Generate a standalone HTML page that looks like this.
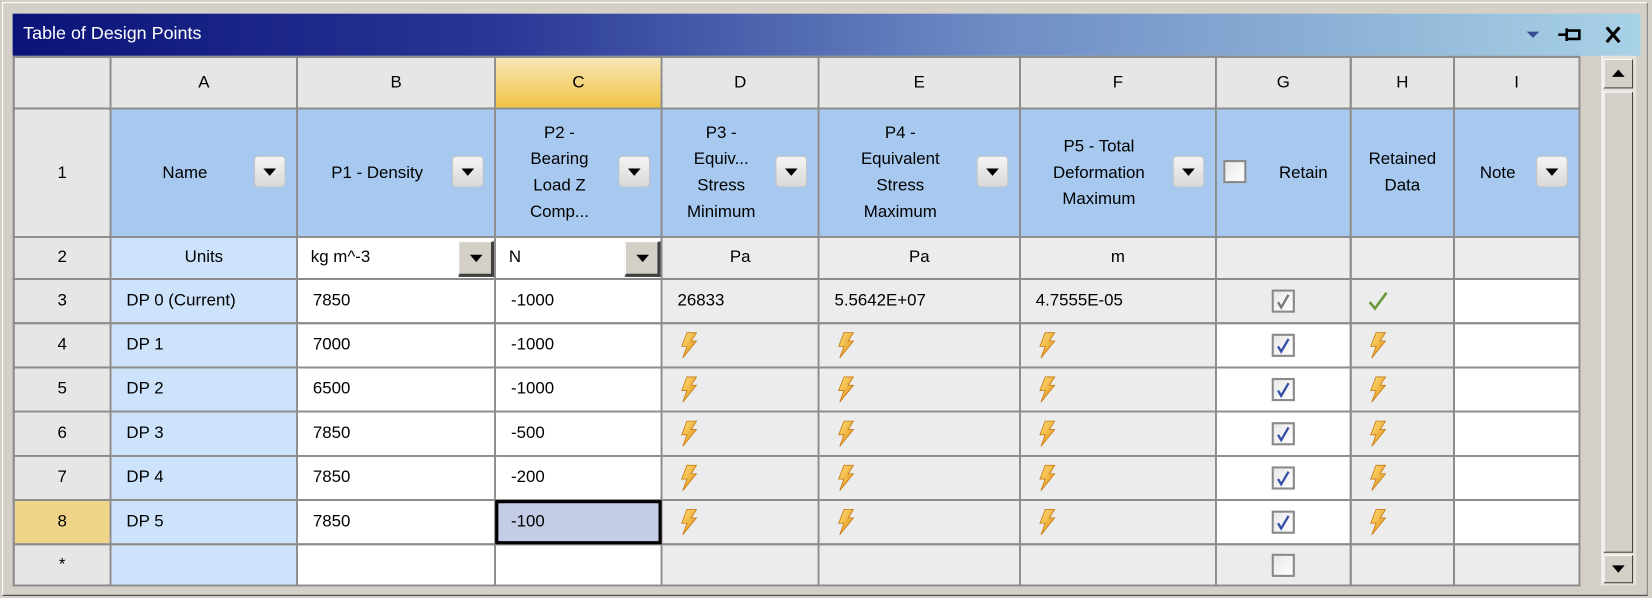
<!DOCTYPE html>
<html><head><meta charset="utf-8"><style>
html,body{margin:0;padding:0;background:#d4d0c8;width:1652px;height:598px;overflow:hidden}
#w{position:absolute;left:0;top:0;width:1568px;height:568px;transform:scale(1.0536,1.0528);transform-origin:0 0;font-family:Tahoma,"Liberation Sans","DejaVu Sans",sans-serif}
#outer{position:absolute;left:2px;top:2px;width:1560px;height:562px;border:1px solid #fff;border-right-color:#808080;border-bottom-color:#404040;background:#d4d0c8}
#title{position:absolute;left:12px;top:13px;width:1545px;height:40px;background:linear-gradient(90deg,#0a1378 0%,#2a3796 30%,#6d8cc4 60%,#a8d2e6 100%);color:#fff;font-size:17px;line-height:38px;padding-left:10px;box-sizing:border-box}
#ctl{position:absolute;right:-4px;top:0;width:120px;height:40px;color:#000;font-weight:bold;font-size:18px}
table{position:absolute;left:12px;top:53px;border-collapse:collapse;table-layout:fixed;font-size:16px;color:#000}
td{border:2px solid #8c8c8c;padding:0 0 0 14px;box-sizing:border-box;white-space:nowrap;overflow:hidden;position:relative}
.h td{background:#e6e6e6;text-align:center;padding:0}
td.rn{background:#e6e6e6;text-align:center;padding:0}
.r1 td{background:#a7c9ef;text-align:center;padding:0 40px 0 4px;line-height:25px;white-space:normal}
.r1 td.rn{background:#e6e6e6;padding:0}
.nm{background:#cde3fb}
.wh{background:#fff}
.gr{background:#ececec}
.ctr{text-align:center;padding:0}
.dd{position:absolute;right:10px;top:50%;margin-top:-16px;width:30px;height:30px;border:1px solid #c4c4c4;border-radius:4px;background:linear-gradient(#f4f4f4,#d8d8d8);box-sizing:border-box}
.dd:after{content:"";position:absolute;left:8px;top:11px;border-left:6px solid transparent;border-right:6px solid transparent;border-top:7px solid #000}
.dd2{position:absolute;right:0;top:3px;width:34px;height:34px;background:#d4d0c8;border:1px solid #fff;border-right:3px solid #404040;border-bottom:3px solid #404040;box-sizing:border-box}
.dd2:after{content:"";position:absolute;left:10px;top:12px;border-left:6px solid transparent;border-right:6px solid transparent;border-top:7px solid #000}
.cb{display:inline-block;width:22px;height:22px;border:2px solid #8a8a8a;background:linear-gradient(135deg,#e8e8e8,#fff);box-sizing:border-box;vertical-align:middle;position:relative}
.bolt{display:inline-block;vertical-align:middle}
</style></head><body><div id="w">
<div id="outer"></div>
<div id="title">Table of Design Points
<div id="ctl"><svg width="120" height="40" style="position:absolute;right:0;top:0"><path d="M8 17h12l-6 6z" fill="#3a4a8c"/><path d="M38 20h8M46 14v12M46 16h12v8H46M58 16v8" stroke="#000" stroke-width="2.5" fill="none"/><path d="M84 13l12 14M96 13L84 27" stroke="#000" stroke-width="3"/></svg></div></div>
<table>
<colgroup><col style="width:92px"><col style="width:177px"><col style="width:188px"><col style="width:158px"><col style="width:149px"><col style="width:191px"><col style="width:186px"><col style="width:128px"><col style="width:98px"><col style="width:119px"></colgroup>
<tr class="h" style="height:49px"><td></td><td>A</td><td>B</td><td style="background:linear-gradient(#f7e7b6,#f2c444)">C</td><td>D</td><td>E</td><td>F</td><td>G</td><td>H</td><td>I</td></tr>
<tr class="r1" style="height:122px"><td class="rn">1</td><td>Name<span class="dd"></span></td><td style="padding-left:4px">P1 - Density<span class="dd"></span></td><td>P2 -<br>Bearing<br>Load Z<br>Comp...<span class="dd"></span></td><td>P3 -<br>Equiv...<br>Stress<br>Minimum<span class="dd"></span></td><td>P4 -<br>Equivalent<br>Stress<br>Maximum<span class="dd"></span></td><td>P5 - Total<br>Deformation<br>Maximum<span class="dd"></span></td><td style="padding:0 0 0 38px">Retain<span class="cb" style="position:absolute;left:6px;top:48px"></span></td><td style="padding:0">Retained<br>Data</td><td>Note<span class="dd"></span></td></tr>
<tr style="height:40px"><td class="rn">2</td><td class="nm ctr">Units</td><td class="wh" style="padding-left:12px">kg m^-3<span class="dd2"></span></td><td class="wh" style="padding-left:12px">N<span class="dd2"></span></td><td class="gr ctr">Pa</td><td class="gr ctr">Pa</td><td class="gr ctr">m</td><td class="gr"></td><td class="gr"></td><td class="gr"></td></tr>
<tr style="height:42px"><td class="rn">3</td><td class="nm">DP 0 (Current)</td><td class="wh">7850</td><td class="wh">-1000</td><td class="gr">26833</td><td class="gr">5.5642E+07</td><td class="gr">4.7555E-05</td><td class="gr ctr"><span class="cb"><svg width="18" height="18" style="position:absolute;left:0;top:0"><path d="M4 10l3 5 7-12" stroke="#777" stroke-width="2.2" fill="none"/></svg></span></td><td class="gr"><svg width="22" height="22" class="bolt"><path d="M3 12l5 6 11-15" stroke="#6a9a3a" stroke-width="2.5" fill="none"/></svg></td><td class="wh"></td></tr>
<tr style="height:42px"><td class="rn">4</td><td class="nm">DP 1</td><td class="wh">7000</td><td class="wh">-1000</td><td class="gr">B</td><td class="gr">B</td><td class="gr">B</td><td class="wh ctr">C</td><td class="gr">B</td><td class="wh"></td></tr>
<tr style="height:42px"><td class="rn">5</td><td class="nm">DP 2</td><td class="wh">6500</td><td class="wh">-1000</td><td class="gr">B</td><td class="gr">B</td><td class="gr">B</td><td class="wh ctr">C</td><td class="gr">B</td><td class="wh"></td></tr>
<tr style="height:42px"><td class="rn">6</td><td class="nm">DP 3</td><td class="wh">7850</td><td class="wh">-500</td><td class="gr">B</td><td class="gr">B</td><td class="gr">B</td><td class="wh ctr">C</td><td class="gr">B</td><td class="wh"></td></tr>
<tr style="height:42px"><td class="rn">7</td><td class="nm">DP 4</td><td class="wh">7850</td><td class="wh">-200</td><td class="gr">B</td><td class="gr">B</td><td class="gr">B</td><td class="wh ctr">C</td><td class="gr">B</td><td class="wh"></td></tr>
<tr style="height:42px"><td class="rn" style="background:#f0d48a">8</td><td class="nm">DP 5</td><td class="wh">7850</td><td style="background:#c4cce6;outline:3px solid #000;outline-offset:-3px">-100</td><td class="gr">B</td><td class="gr">B</td><td class="gr">B</td><td class="wh ctr">C</td><td class="gr">B</td><td class="wh"></td></tr>
<tr style="height:39px"><td class="rn">*</td><td class="nm"></td><td class="wh"></td><td class="wh"></td><td class="gr"></td><td class="gr"></td><td class="gr"></td><td class="gr ctr"><span class="cb"></span></td><td class="gr"></td><td class="gr"></td></tr>
</table>
<div style="position:absolute;left:1520px;top:53px;width:32px;height:503px;background:#e6e3dc;border-left:1px solid #fff"></div>
<div style="position:absolute;left:1522px;top:56px;width:28px;height:28px;background:#d4d0c8;border:1px solid #fff;border-right-color:#404040;border-bottom-color:#404040;box-sizing:border-box"><div style="position:absolute;left:7px;top:9px;border-left:6px solid transparent;border-right:6px solid transparent;border-bottom:7px solid #000"></div></div>
<div style="position:absolute;left:1522px;top:87px;width:28px;height:438px;background:#d4d0c8;border:1px solid #fff;border-right-color:#404040;border-bottom-color:#404040;box-sizing:border-box"></div>
<div style="position:absolute;left:1522px;top:527px;width:28px;height:27px;background:#d4d0c8;border:1px solid #fff;border-right-color:#404040;border-bottom-color:#404040;box-sizing:border-box"><div style="position:absolute;left:7px;top:9px;border-left:6px solid transparent;border-right:6px solid transparent;border-top:7px solid #000"></div></div>
</div>
<script>
var bolt='<svg width="20" height="26" class="bolt" viewBox="0 0 20 26"><defs><linearGradient id="g" x1="0" y1="0" x2="1" y2="1"><stop offset="0" stop-color="#ffe27a"/><stop offset="1" stop-color="#e08a10"/></linearGradient></defs><path d="M9 1h9l-5 8h5L5 25l4-11H4z" fill="url(#g)" stroke="#c97a10" stroke-width="0.8"/></svg>';
var chk='<span class="cb"><svg width="18" height="18" style="position:absolute;left:0;top:0"><path d="M4 10l3 5 7-12" stroke="#3550a8" stroke-width="2.2" fill="none"/></svg></span>';
document.querySelectorAll('td.gr, td.wh').forEach(function(t){if(t.textContent==='B'&&t.children.length===0&&t.classList.contains('gr'))t.innerHTML=bolt;else if(t.textContent==='C'&&t.classList.contains('wh'))t.innerHTML=chk;});
</script>
</body></html>
